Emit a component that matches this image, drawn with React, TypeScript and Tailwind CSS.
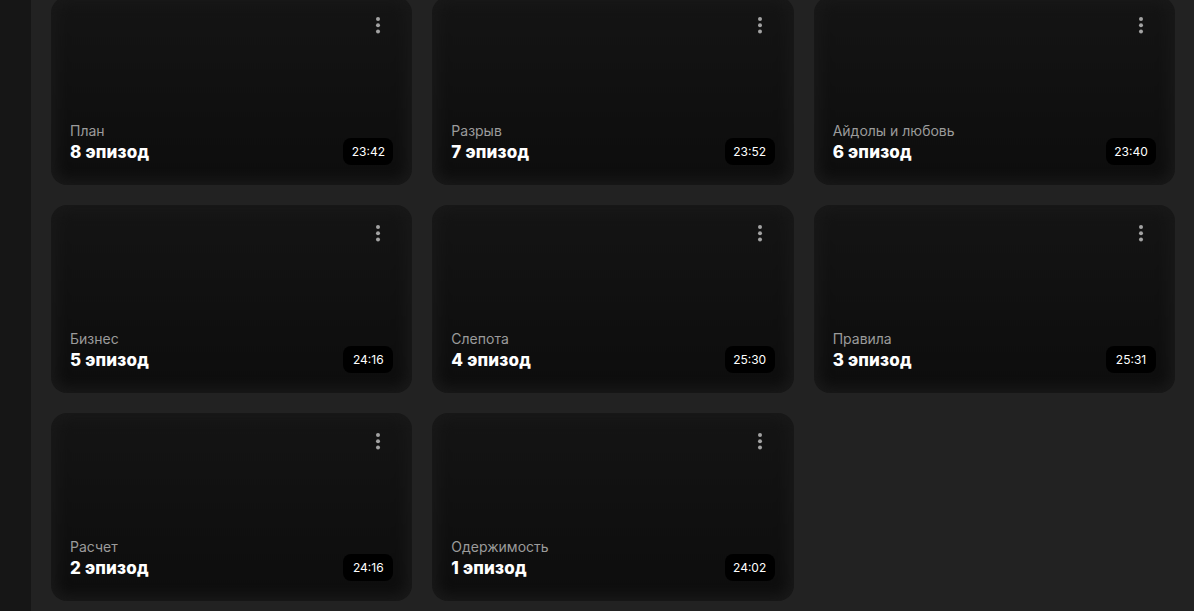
import React from "react";

const episodes = [
  { title: "План", ep: "8 эпизод", time: "23:42" },
  { title: "Разрыв", ep: "7 эпизод", time: "23:52" },
  { title: "Айдолы и любовь", ep: "6 эпизод", time: "23:40" },
  { title: "Бизнес", ep: "5 эпизод", time: "24:16" },
  { title: "Слепота", ep: "4 эпизод", time: "25:30" },
  { title: "Правила", ep: "3 эпизод", time: "25:31" },
  { title: "Расчет", ep: "2 эпизод", time: "24:16" },
  { title: "Одержимость", ep: "1 эпизод", time: "24:02" },
];

function Dots() {
  return (
    <svg width="6" height="18" viewBox="0 0 6 18" className="block">
      <circle cx="3" cy="3" r="2" fill="#a3a3a3" />
      <circle cx="3" cy="9.3" r="2" fill="#a3a3a3" />
      <circle cx="3" cy="15.6" r="2" fill="#a3a3a3" />
    </svg>
  );
}

function Card({ title, ep, time }: { title: string; ep: string; time: string }) {
  return (
    <div className="relative h-[188px] rounded-2xl bg-[#181818] overflow-hidden">
      <div className="absolute inset-[6px] rounded-xl bg-gradient-to-b from-[#141414] to-[#0d0d0d] blur-[6px]" />
      <div className="relative flex h-full flex-col justify-between pl-[19px] pr-[19px] pt-[19px] pb-[20px]">
        <div className="flex justify-end pr-[12px]">
          <Dots />
        </div>
        <div className="flex items-end justify-between">
          <div className="flex flex-col">
            <span className="text-[14px] leading-[18px] text-[#9b9b9b] font-['Inter',sans-serif]">{title}</span>
            <span className="mt-[1px] mb-[2px] text-[17px] leading-[22px] font-extrabold text-white font-['Inter',sans-serif] tracking-[0.2px]">{ep}</span>
          </div>
          <div className="flex h-[27px] w-[50px] items-center justify-center rounded-lg bg-black text-[12px] text-white font-['Inter',sans-serif]">
            {time}
          </div>
        </div>
      </div>
    </div>
  );
}

export default function App() {
  return (
    <div className="flex h-[611px] w-full overflow-hidden bg-[#222222]">
      <div className="w-[31px] shrink-0 bg-[#161616]" />
      <div className="flex-1 pl-5 pr-[19px]">
        <div className="-mt-[3px] grid grid-cols-3 gap-x-5 gap-y-5">
          {episodes.map((e) => (
            <Card key={e.ep} {...e} />
          ))}
        </div>
      </div>
    </div>
  );
}
